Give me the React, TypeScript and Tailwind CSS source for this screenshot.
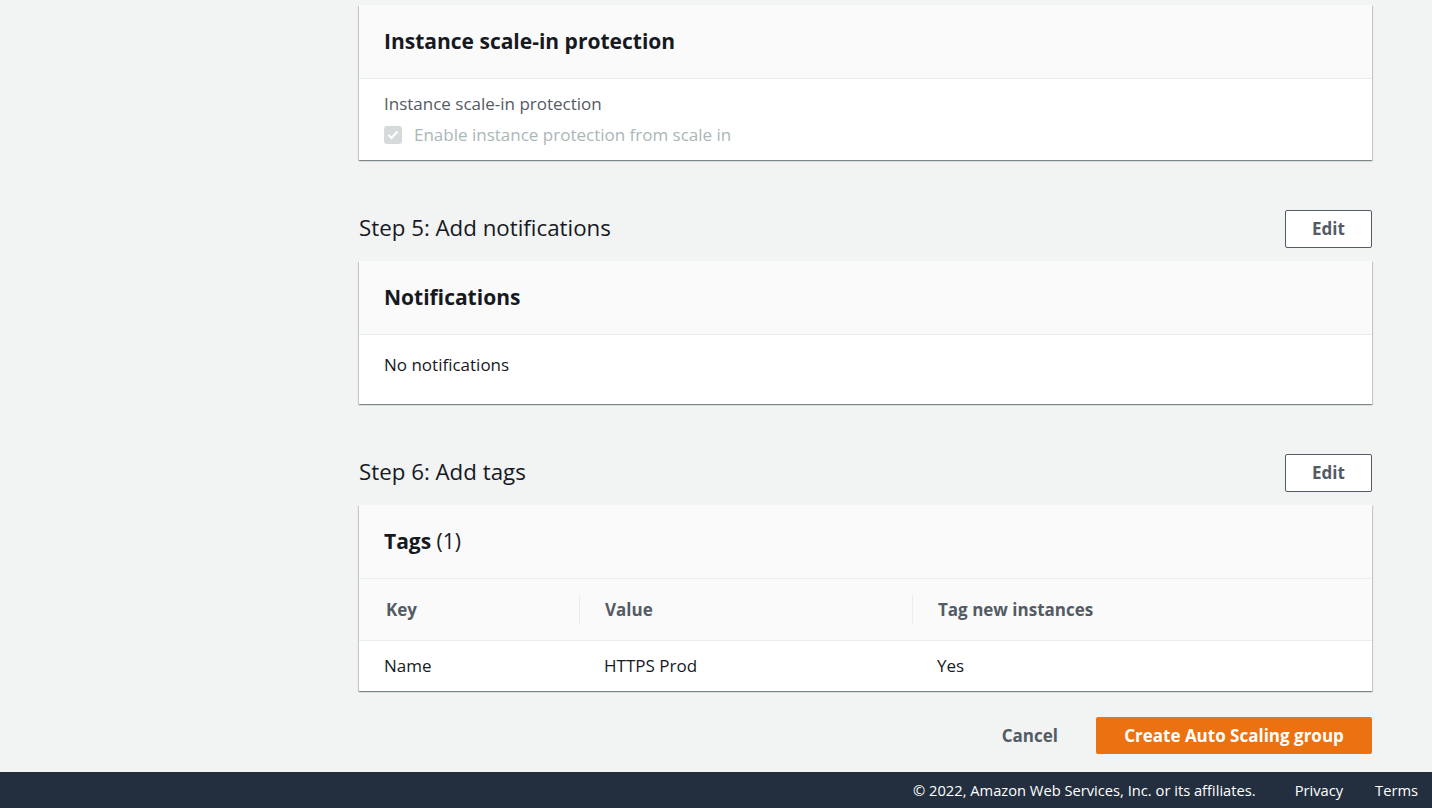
import React from "react";

const card =
  "bg-white shadow-[0_1px_1px_0_rgba(0,28,36,0.3),1px_1px_1px_0_rgba(0,28,36,0.15),-1px_1px_1px_0_rgba(0,28,36,0.15)]";

function CardHeader({ children }: { children: React.ReactNode }) {
  return (
    <div className="bg-[#fafafa] border-b border-[#eaeded] h-[74px] flex items-center px-[25px]">
      <h2 className="text-[21px] font-bold text-[#16191f] leading-none">{children}</h2>
    </div>
  );
}

function StepHeader({ title }: { title: string }) {
  return (
    <div className="flex items-center justify-between h-[37px] mb-[14px]">
      <h1 className="text-[22.3px] text-[#16191f] leading-none">{title}</h1>
      <button className="w-[87px] h-[38px] border border-[#545b64] rounded-[2px] bg-white text-[17px] font-bold text-[#545b64]">
        Edit
      </button>
    </div>
  );
}

export default function App() {
  return (
    <div
      className="w-[1432px] h-[808px] bg-[#f2f3f3] flex flex-col overflow-hidden"
      style={{ fontFamily: '"Open Sans", "Noto Sans", Arial, sans-serif' }}
    >
      <div className="flex-1 pl-[359px] pr-[60px] pt-[5px]">
        <div className={card}>
          <CardHeader>Instance scale-in protection</CardHeader>
          <div className="px-[25px] pt-[14px] pb-[14px]">
            <div className="text-[17px] text-[#545b64] leading-[22px]">Instance scale-in protection</div>
            <div className="flex items-center mt-[9px]">
              <span className="w-[18px] h-[18px] rounded-[3px] bg-[#d5dbdb] flex items-center justify-center">
                <svg width="12" height="10" viewBox="0 0 12 10">
                  <path d="M1.5 5 L4.5 8 L10.5 1.5" stroke="white" strokeWidth="2" fill="none" />
                </svg>
              </span>
              <span className="ml-[12px] text-[17px] text-[#aab7b8] leading-[22px]">
                Enable instance protection from scale in
              </span>
            </div>
          </div>
        </div>

        <div className="mt-[50px]">
          <StepHeader title="Step 5: Add notifications" />
          <div className={card}>
            <CardHeader>Notifications</CardHeader>
            <div className="px-[25px] h-[69px] pt-[19px] text-[17px] leading-[22px] text-[#16191f]">
              No notifications
            </div>
          </div>
        </div>

        <div className="mt-[50px]">
          <StepHeader title="Step 6: Add tags" />
          <div className={card}>
            <CardHeader>
              Tags <span className="font-normal">(1)</span>
            </CardHeader>
            <div className="grid grid-cols-[221px_333px_1fr] bg-[#fafafa] border-b border-[#eaeded] h-[62px] items-center text-[17px] font-bold text-[#545b64]">
              <div className="pl-[27px] border-r border-[#eaeded] h-[30px] flex items-center">Key</div>
              <div className="pl-[25px] border-r border-[#eaeded] h-[30px] flex items-center">Value</div>
              <div className="pl-[25px] h-[30px] flex items-center">Tag new instances</div>
            </div>
            <div className="grid grid-cols-[221px_333px_1fr] h-[50px] items-center text-[17px] text-[#16191f]">
              <div className="pl-[25px]">Name</div>
              <div className="pl-[24px]">HTTPS Prod</div>
              <div className="pl-[24px]">Yes</div>
            </div>
          </div>
        </div>

        <div className="flex justify-end items-center mt-[26px] gap-[38px]">
          <button className="text-[17px] font-bold text-[#545b64]">Cancel</button>
          <button className="h-[37px] w-[276px] bg-[#ec7211] rounded-[2px] text-[17px] font-bold text-white">
            Create Auto Scaling group
          </button>
        </div>
      </div>

      <footer className="h-[36px] bg-[#232f3e] flex items-center justify-end pr-[14px] text-[14.7px] text-white shrink-0">
        <span>© 2022, Amazon Web Services, Inc. or its affiliates.</span>
        <span className="ml-[39px]">Privacy</span>
        <span className="ml-[32px]">Terms</span>
      </footer>
    </div>
  );
}
